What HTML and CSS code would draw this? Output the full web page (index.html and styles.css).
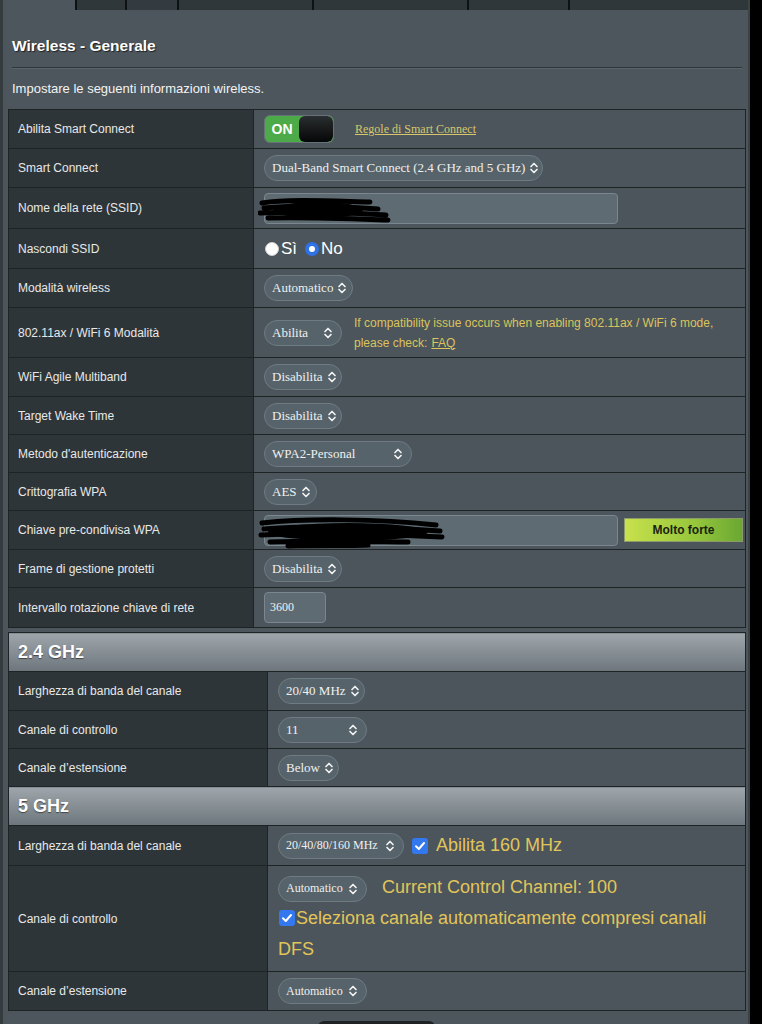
FILE: index.html
```html
<!DOCTYPE html>
<html lang="it">
<head>
<meta charset="utf-8">
<title>Wireless - Generale</title>
<link rel="stylesheet" href="styles.css">
</head>
<body>
<div class="panel">
  <div class="tabs">
    <div class="tab t1"></div>
    <div class="tab t2"></div>
    <div class="tab t3"></div>
    <div class="tab t4"></div>
    <div class="tab t5"></div>
    <div class="tab t6"></div>
  </div>
  <div class="title">Wireless - Generale</div>
  <div class="rule"></div>
  <div class="desc">Impostare le seguenti informazioni wireless.</div>

  <table class="form">
    <colgroup><col class="lab1"><col></colgroup>
    <tr class="h39">
      <th>Abilita Smart Connect</th>
      <td>
        <div class="row">
          <div class="toggle"><span class="on">ON</span><span class="knob"></span></div>
          <a class="rules">Regole di Smart Connect</a>
        </div>
      </td>
    </tr>
    <tr class="h39">
      <th>Smart Connect</th>
      <td><div class="sel w-dual"><span>Dual-Band Smart Connect (2.4 GHz and 5 GHz)</span><svg class="chev" viewBox="0 0 10 12"><path d="M2 4.5 L5 1.5 L8 4.5 M2 7.5 L5 10.5 L8 7.5"/></svg></div></td>
    </tr>
    <tr class="h41">
      <th>Nome della rete (SSID)</th>
      <td><div class="inp w-long">
        <svg class="scrib ssid" viewBox="0 0 140 30"><path d="M4 7 C30 3 70 5 112 6 M6 12 C40 9 90 11 120 13 M2 17 C40 15 100 17 128 19 M10 22 C50 21 100 23 130 24"/><ellipse cx="60" cy="14" rx="45" ry="8"/></svg>
      </div></td>
    </tr>
    <tr class="h40">
      <th>Nascondi SSID</th>
      <td>
        <div class="row radios">
          <span class="radio"></span><span class="rlab">Sì</span>
          <span class="radio checked"></span><span class="rlab">No</span>
        </div>
      </td>
    </tr>
    <tr class="h39">
      <th>Modalità wireless</th>
      <td><div class="sel w-auto"><span>Automatico</span><svg class="chev" viewBox="0 0 10 12"><path d="M2 4.5 L5 1.5 L8 4.5 M2 7.5 L5 10.5 L8 7.5"/></svg></div></td>
    </tr>
    <tr class="h50">
      <th>802.11ax / WiFi 6 Modalità</th>
      <td>
        <div class="row">
          <div class="sel w-abil"><span>Abilita</span><svg class="chev" viewBox="0 0 10 12"><path d="M2 4.5 L5 1.5 L8 4.5 M2 7.5 L5 10.5 L8 7.5"/></svg></div>
          <p class="note">If compatibility issue occurs when enabling 802.11ax / WiFi 6 mode, please check:<a class="faq">FAQ</a></p>
        </div>
      </td>
    </tr>
    <tr class="h39">
      <th>WiFi Agile Multiband</th>
      <td><div class="sel w-dis"><span>Disabilita</span><svg class="chev" viewBox="0 0 10 12"><path d="M2 4.5 L5 1.5 L8 4.5 M2 7.5 L5 10.5 L8 7.5"/></svg></div></td>
    </tr>
    <tr class="h38">
      <th>Target Wake Time</th>
      <td><div class="sel w-dis"><span>Disabilita</span><svg class="chev" viewBox="0 0 10 12"><path d="M2 4.5 L5 1.5 L8 4.5 M2 7.5 L5 10.5 L8 7.5"/></svg></div></td>
    </tr>
    <tr class="h38">
      <th>Metodo d'autenticazione</th>
      <td><div class="sel w-wpa"><span>WPA2-Personal</span><svg class="chev" viewBox="0 0 10 12"><path d="M2 4.5 L5 1.5 L8 4.5 M2 7.5 L5 10.5 L8 7.5"/></svg></div></td>
    </tr>
    <tr class="h38">
      <th>Crittografia WPA</th>
      <td><div class="sel w-aes"><span>AES</span><svg class="chev" viewBox="0 0 10 12"><path d="M2 4.5 L5 1.5 L8 4.5 M2 7.5 L5 10.5 L8 7.5"/></svg></div></td>
    </tr>
    <tr class="h39">
      <th>Chiave pre-condivisa WPA</th>
      <td>
        <div class="row">
          <div class="inp w-long">
            <svg class="scrib psk" viewBox="0 0 190 36"><path d="M4 8 C50 3 120 4 178 10 M6 14 C60 10 130 12 182 16 M3 20 C60 17 140 20 184 22 M12 27 C60 25 130 27 150 27 M30 31 C60 30 90 31 110 30"/><ellipse cx="90" cy="17" rx="80" ry="9"/></svg>
          </div>
          <div class="strength">Molto forte</div>
        </div>
      </td>
    </tr>
    <tr class="h38">
      <th>Frame di gestione protetti</th>
      <td><div class="sel w-dis"><span>Disabilita</span><svg class="chev" viewBox="0 0 10 12"><path d="M2 4.5 L5 1.5 L8 4.5 M2 7.5 L5 10.5 L8 7.5"/></svg></div></td>
    </tr>
    <tr class="h40">
      <th>Intervallo rotazione chiave di rete</th>
      <td><div class="inp w-num">3600</div></td>
    </tr>
  </table>

  <table class="form bands">
    <colgroup><col class="lab2"><col></colgroup>
    <tr class="band"><th colspan="2">2.4 GHz</th></tr>
    <tr class="h39">
      <th>Larghezza di banda del canale</th>
      <td><div class="sel w-2040"><span>20/40 MHz</span><svg class="chev" viewBox="0 0 10 12"><path d="M2 4.5 L5 1.5 L8 4.5 M2 7.5 L5 10.5 L8 7.5"/></svg></div></td>
    </tr>
    <tr class="h38">
      <th>Canale di controllo</th>
      <td><div class="sel w-11"><span>11</span><svg class="chev" viewBox="0 0 10 12"><path d="M2 4.5 L5 1.5 L8 4.5 M2 7.5 L5 10.5 L8 7.5"/></svg></div></td>
    </tr>
    <tr class="h38">
      <th>Canale d’estensione</th>
      <td><div class="sel w-below"><span>Below</span><svg class="chev" viewBox="0 0 10 12"><path d="M2 4.5 L5 1.5 L8 4.5 M2 7.5 L5 10.5 L8 7.5"/></svg></div></td>
    </tr>
    <tr class="band"><th colspan="2">5 GHz</th></tr>
    <tr class="h40">
      <th>Larghezza di banda del canale</th>
      <td>
        <div class="row">
          <div class="sel w-160 small"><span>20/40/80/160 MHz</span><svg class="chev" viewBox="0 0 10 12"><path d="M2 4.5 L5 1.5 L8 4.5 M2 7.5 L5 10.5 L8 7.5"/></svg></div>
          <span class="check c160"><svg viewBox="0 0 16 16"><path d="M4 8.3 L6.8 11 L12 5"/></svg></span>
          <span class="big b160">Abilita 160 MHz</span>
        </div>
      </td>
    </tr>
    <tr class="h106">
      <th>Canale di controllo</th>
      <td class="multi">
        <div class="sel w-auto5 small inl"><span>Automatico</span><svg class="chev" viewBox="0 0 10 12"><path d="M2 4.5 L5 1.5 L8 4.5 M2 7.5 L5 10.5 L8 7.5"/></svg></div><span class="big cur">Current Control Channel: 100</span><br><span class="check inl2"><svg viewBox="0 0 16 16"><path d="M4 8.3 L6.8 11 L12 5"/></svg></span><span class="big">Seleziona canale automaticamente compresi canali DFS</span>
      </td>
    </tr>
    <tr class="h39">
      <th>Canale d’estensione</th>
      <td><div class="sel w-auto5 small"><span>Automatico</span><svg class="chev" viewBox="0 0 10 12"><path d="M2 4.5 L5 1.5 L8 4.5 M2 7.5 L5 10.5 L8 7.5"/></svg></div></td>
    </tr>
  </table>
  <div class="footer"><div class="btn"></div></div>
</div>
</body>
</html>
```

FILE: styles.css
```css
html, body {
  margin: 0;
  padding: 0;
  background: #000;
}
body {
  font-family: "Liberation Sans", Arial, sans-serif;
  color: #ececec;
}
.panel {
  width: 745px;
  height: 1024px;
  overflow: hidden;
  background: #4d565c;
  border-left: 3px solid #353c40;
  border-right: 2px solid #3b4347;
}
.tabs {
  display: flex;
  height: 10px;
  margin-left: 72px;
}
.tab {
  background: #30373b;
  border-left: 2px solid #0f1213;
  box-sizing: border-box;
}
.t1 { width: 50px; }
.t2 { width: 52px; background: #343b40; }
.t3 { width: 135px; }
.t4 { width: 155px; }
.t5 { width: 101px; }
.t6 { width: 180px; }
.title {
  margin: 27px 0 0 9px;
  font-weight: bold;
  font-size: 15.5px;
  line-height: 18px;
  color: #fff;
  text-shadow: 1px 1px 1px #1c2022;
}
.rule {
  margin: 12px 0 0 9px;
  width: 730px;
  height: 1px;
  background: #2f3639;
  border-bottom: 1px solid #59636a;
}
.desc {
  margin: 12px 0 0 9px;
  font-size: 13px;
  line-height: 16px;
  color: #f3f3f3;
}
table.form {
  margin: 12px 0 0 5px;
  width: 738px;
  border-collapse: collapse;
  table-layout: fixed;
  border: 1px solid #1e2326;
}
table.bands {
  margin-top: 4px;
}
col.lab1 { width: 245px; }
col.lab2 { width: 259px; }
table.form th,
table.form td {
  border: 1px solid #1e2326;
  padding: 0;
  vertical-align: middle;
}
table.form th {
  background: #2e3538;
  text-align: left;
  font-weight: normal;
  font-size: 12px;
  color: #e8e8e8;
  padding-left: 9px;
}
table.form td {
  background: #4b555b;
  padding-left: 10px;
}
tr.h38 { height: 38px; }
tr.h39 { height: 39px; }
tr.h40 { height: 40px; }
tr.h41 { height: 41px; }
tr.h50 { height: 50px; }
tr.h106 { height: 106px; }
tr.band { height: 39px; }
table.form tr.band th {
  background: linear-gradient(#9ea6ac, #6d767c);
  font-weight: bold;
  font-size: 18px;
  color: #fff;
  padding-left: 9px;
  text-shadow: 0 1px 1px #444;
}

.row {
  display: flex;
  align-items: center;
}

/* select */
.sel {
  display: flex;
  align-items: center;
  justify-content: space-between;
  box-sizing: border-box;
  height: 26px;
  padding: 0 8px 0 7px;
  border: 1px solid #6f7b82;
  border-radius: 13px;
  background: #56636a;
  font-family: "Liberation Serif", "Times New Roman", serif;
  font-size: 13px;
  color: #f0f0f0;
  white-space: nowrap;
  flex: none;
}
.sel.small { font-size: 12px; }
.sel.inl { display: inline-flex; vertical-align: middle; }
.chev {
  width: 10px;
  height: 12px;
  flex: none;
  margin-left: 4px;
}
.chev path {
  fill: none;
  stroke: #f2f2f2;
  stroke-width: 1.7;
  stroke-linecap: round;
  stroke-linejoin: round;
}
.w-dual { width: 279px; }
.w-auto { width: 89px; }
.w-abil { width: 78px; }
.w-dis { width: 78px; }
.w-wpa { width: 148px; }
.w-aes { width: 53px; }
.w-2040 { width: 87px; }
.w-11 { width: 89px; }
.w-below { width: 61px; }
.w-160 { width: 126px; }
.w-auto5 { width: 89px; }

/* toggle */
.toggle {
  display: flex;
  width: 70px;
  height: 28px;
  box-sizing: border-box;
  border: 1px solid #66727a;
  border-radius: 6px;
  background: #4caa48;
  overflow: hidden;
  flex: none;
}
.toggle .on {
  width: 34px;
  line-height: 26px;
  text-align: center;
  font-weight: bold;
  font-size: 14px;
  color: #fff;
}
.toggle .knob {
  flex: 1;
  background: linear-gradient(#2a2e30, #050607);
  border-radius: 6px;
}
.rules {
  margin-left: 21px;
  font-family: "Liberation Serif", "Times New Roman", serif;
  font-size: 12px;
  color: #d8c56c;
  text-decoration: underline;
}

/* inputs */
.inp {
  position: relative;
  box-sizing: border-box;
  height: 31px;
  border: 1px solid #7a878e;
  border-radius: 4px;
  background: #5e6b72;
  font-family: "Liberation Serif", "Times New Roman", serif;
  font-size: 12px;
  color: #f0f0f0;
  line-height: 29px;
  padding-left: 5px;
  flex: none;
}
.w-long { width: 354px; }
.w-num { width: 62px; }
.scrib {
  position: absolute;
  left: -7px;
  top: 3px;
}
.scrib path {
  fill: none;
  stroke: #000;
  stroke-width: 5;
  stroke-linecap: round;
}
.scrib ellipse { fill: #000; }
.scrib.ssid { width: 140px; height: 30px; top: 2px; }
.scrib.psk { width: 190px; height: 36px; top: -1px; }

/* radios */
.radios {
  font-size: 17px;
  color: #fff;
}
.radio {
  width: 14px;
  height: 14px;
  border-radius: 50%;
  background: #fff;
  box-sizing: border-box;
  border: 1px solid #d0d0d0;
  margin-left: 1px;
  flex: none;
}
.radio.checked {
  background: #fff;
  border: 4.5px solid #2f72e6;
  margin-left: 8px;
}
.rlab { margin-left: 2px; }

.note {
  margin: 0 0 0 12px;
  width: 370px;
  font-size: 12px;
  line-height: 20px;
  color: #dcc35c;
}
.note .faq {
  display: inline-block;
  margin-left: 4px;
  text-decoration: underline;
}
.strength {
  margin-left: 6px;
  width: 119px;
  height: 24px;
  box-sizing: border-box;
  border: 1px solid #8d9a6a;
  background: linear-gradient(90deg, #c8e14c, #96c63c 60%, #6aa832);
  text-align: center;
  font-weight: bold;
  font-size: 12px;
  line-height: 22px;
  color: #1a1f10;
  flex: none;
}

/* checkbox */
.check {
  display: inline-block;
  vertical-align: middle;
  width: 16px;
  height: 16px;
  border-radius: 3px;
  background: #3478f0;
  flex: none;
}
.check svg { width: 16px; height: 16px; display: block; }
.check path {
  fill: none;
  stroke: #fff;
  stroke-width: 2;
  stroke-linecap: round;
  stroke-linejoin: round;
}
.c160 { margin-left: 8px; }
.big {
  font-size: 18px;
  color: #e2c55a;
}
.b160 { margin-left: 8px; }
td.multi {
  line-height: 31px;
  padding-top: 6px;
  padding-bottom: 4px;
}
td.multi .big { margin-left: 1px; }
td.multi .cur { margin-left: 15px; }
.check.inl2 { margin-left: 1px; vertical-align: -2px; }
.footer {
  height: 30px;
}
.btn {
  margin: 10px 0 0 315px;
  width: 117px;
  height: 20px;
  border-radius: 6px;
  background: #1f2325;
}
```
